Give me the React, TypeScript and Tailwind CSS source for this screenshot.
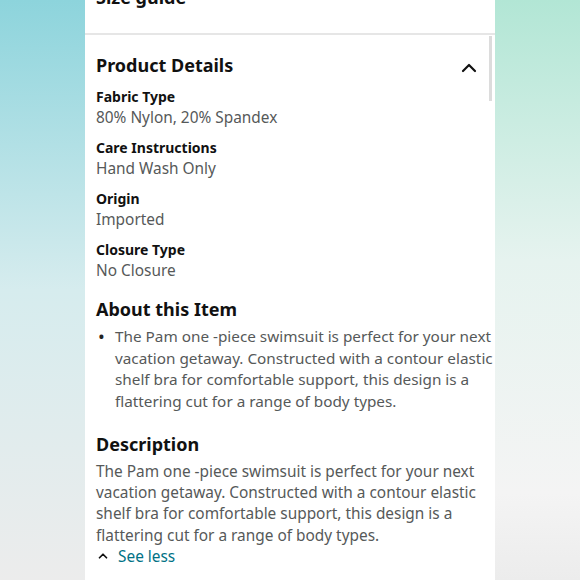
import { ChevronUp, ChevronDown } from 'lucide-react'

const details = [
  { label: 'Fabric Type', value: '80% Nylon, 20% Spandex' },
  { label: 'Care Instructions', value: 'Hand Wash Only' },
  { label: 'Origin', value: 'Imported' },
  { label: 'Closure Type', value: 'No Closure' },
]

const blurb =
  'The Pam one -piece swimsuit is perfect for your next vacation getaway. Constructed with a contour elastic shelf bra for comfortable support, this design is a flattering cut for a range of body types.'

export default function App() {
  return (
    <div
      className="flex h-[580px] w-[580px] overflow-hidden"
      style={{ fontFamily: '"Noto Sans", "Open Sans", sans-serif' }}
    >
      <div className="w-[85px] shrink-0 bg-[linear-gradient(to_bottom,#8dd4dc,#d6ecee_50%,#ececec)]" />

      <div className="relative w-[410px] shrink-0 overflow-hidden bg-white">
        {/* scrollbar */}
        <div className="absolute right-[3px] top-[36px] h-[65px] w-[3px] bg-[#dcdcdc]" />

        {/* size guide row, scrolled mostly out of view */}
        <div className="-mt-[16px] flex items-center justify-between border-b-2 border-[#e6e6e6] pl-[11px] pr-[14px] pb-[22px]">
          <span className="text-[18px] font-bold text-[#111]">Size guide</span>
          <ChevronDown className="-mt-[6px] h-5 w-5 text-[#111]" strokeWidth={2.5} />
        </div>

        <div className="pl-[11px] pt-[15px]">
          <div className="flex items-center justify-between pr-[14px]">
            <h2 className="text-[18px] font-bold leading-[26px] text-[#111]">Product Details</h2>
            <ChevronUp className="mt-[6px] h-6 w-6 text-[#111]" strokeWidth={2.2} />
          </div>

          <div className="mt-[6px] flex flex-col gap-[9px]">
            {details.map((d) => (
              <div key={d.label}>
                <div className="text-[14px] font-bold leading-[21px] text-[#111]">{d.label}</div>
                <div className="text-[15.4px] leading-[21px] text-[#565959]">{d.value}</div>
              </div>
            ))}
          </div>

          <h2 className="mt-[15px] text-[18px] font-bold leading-[26px] text-[#111]">About this Item</h2>
          <ul className="mt-[4px] flex">
            <li className="flex">
              <span className="w-[19px] shrink-0 pl-[2px] text-[18px] leading-[21.5px] text-[#222]">•</span>
              <span className="text-[15.3px] leading-[21.5px] text-[#565959]">{blurb}</span>
            </li>
          </ul>

          <h2 className="mt-[19px] text-[18px] font-bold leading-[26px] text-[#111]">Description</h2>
          <p className="mt-[4px] text-[15.4px] leading-[21.2px] text-[#565959]">{blurb}</p>
          <button className="flex items-center gap-[8px] text-[15.4px] leading-[21px] text-[#007185]">
            <ChevronUp className="h-[14px] w-[14px] text-[#111]" strokeWidth={3} />
            See less
          </button>
        </div>
      </div>

      <div className="w-[85px] shrink-0 bg-[linear-gradient(to_bottom,#b2e6d5,#e6f3ef_45%,#f4f4f4_85%,#ececec)]" />
    </div>
  )
}
